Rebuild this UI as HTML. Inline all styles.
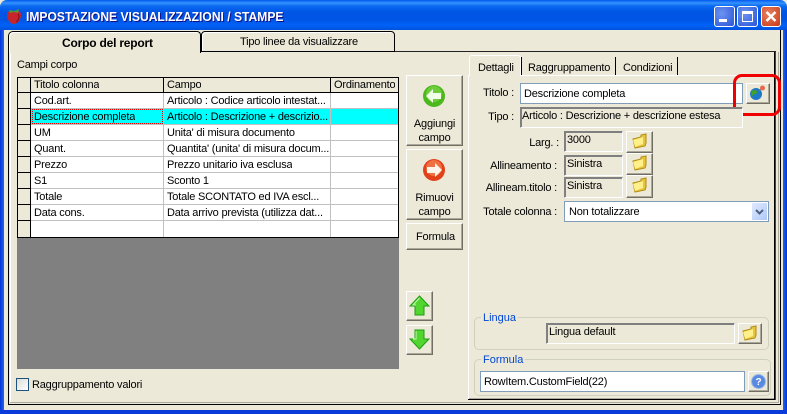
<!DOCTYPE html>
<html><head><meta charset="utf-8"><style>
html,body{margin:0;padding:0;background:#fff}
#w{position:relative;width:787px;height:414px;overflow:hidden;background:#ECE9D8;font:11px/13px "Liberation Sans",sans-serif;color:#000;letter-spacing:-.2px}
#w div,#w svg{position:absolute}
.t{white-space:nowrap}
.btn{background:#ECE9D8;border:1px solid;border-color:#fff #716F64 #716F64 #fff;box-shadow:inset -1px -1px 0 #ACA899;box-sizing:border-box;text-align:center}
.ro{background:#ECE9D8;border:1px solid;border-color:#808080 #fff #fff #808080;box-shadow:inset 1px 1px 0 #808080;box-sizing:border-box;padding:2px 0 0 2px;white-space:nowrap}
.inp{background:#fff;border:1px solid #7F9DB9;box-sizing:border-box;padding:4px 0 0 3px;white-space:nowrap}
.c{white-space:nowrap;height:15px;line-height:17px;overflow:hidden}
.lb{text-align:right;white-space:nowrap}
.grp{border:1px solid #D0D0BF;border-radius:5px;box-sizing:border-box}
.leg{background:#ECE9D8;color:#0046D5;padding:0 2px;white-space:nowrap}
.cap{border-radius:3px;border:1px solid #fff;box-sizing:border-box}
</style></head><body><div id="w">
<!-- title bar -->
<div style="left:0;top:0;width:787px;height:30px;border-radius:7px 7px 0 0;background:linear-gradient(#0058EE 0,#3593FF 3px,#0A6AF0 6px,#0055E5 12px,#0055E5 20px,#0062F8 25px,#0052DD 30px)"></div>
<div style="left:0;top:30px;width:4px;height:384px;background:linear-gradient(90deg,#0831D9,#166AEE)"></div>
<div style="left:783px;top:30px;width:4px;height:384px;background:linear-gradient(270deg,#0831D9,#166AEE)"></div>
<div style="left:0;top:410px;width:787px;height:4px;background:#0B3ADB"></div>
<svg style="left:7px;top:8px" width="14" height="16" viewBox="0 0 14 16"><path d="M7 3C2 2 0 4 0 7c0 4 3 9 7 9s7-5 7-9c0-3-2-5-7-4z" fill="#C8242C"/><path d="M2 2l5 1 5-2-1 4-4-1-4 1z" fill="#4E9A36"/><path d="M11 6c2 2 1 6-2 8" stroke="#7A1018" fill="none"/></svg>
<div class="t" style="left:26px;top:9px;color:#fff;letter-spacing:0;font:bold 13px/16px 'Liberation Sans',sans-serif;text-shadow:1px 1px 0 #0F1089;transform-origin:0 0;transform:scaleX(.93)">IMPOSTAZIONE VISUALIZZAZIONI / STAMPE</div>
<!-- caption buttons -->
<div class="cap" style="left:714px;top:6px;width:21px;height:21px;background:radial-gradient(circle at 35% 35%,#6C93F0,#2A55D8)"></div>
<div style="left:719px;top:19px;width:8px;height:3px;background:#fff"></div>
<div class="cap" style="left:737px;top:6px;width:21px;height:21px;background:radial-gradient(circle at 35% 35%,#6C93F0,#2A55D8)"></div>
<div style="left:742px;top:11px;width:11px;height:11px;border:1px solid #fff;border-top-width:3px;box-sizing:border-box"></div>
<div class="cap" style="left:761px;top:6px;width:20px;height:21px;background:radial-gradient(circle at 35% 35%,#E8805F,#C83A18)"></div>
<svg style="left:761px;top:6px" width="20" height="21"><path d="M5.500 6l9 9M14.500 6l-9 9" stroke="#fff" stroke-width="2.4"/></svg>
<!-- outer frame -->
<div style="left:8px;top:36px;width:1px;height:369px;background:#000"></div>
<div style="left:780px;top:30px;width:1px;height:375px;background:#000"></div>
<div style="left:8px;top:404px;width:773px;height:1px;background:#000"></div>
<div style="left:10px;top:402px;width:769px;height:1px;background:#ACA899"></div>
<div style="left:778px;top:52px;width:1px;height:351px;background:#ACA899"></div>
<div style="left:10px;top:52px;width:1px;height:350px;background:#fff"></div>
<!-- second tab -->
<div style="left:201px;top:31px;width:194px;height:21px;border:1px solid #000;border-radius:4px 4px 0 0;box-sizing:border-box;background:#ECE9D8;box-shadow:inset 1px 1px 0 #fff"></div>
<div class="t" style="left:240px;top:36px">Tipo linee da visualizzare</div>
<div style="left:395px;top:51px;width:381px;height:1px;background:#222"></div>
<!-- selected tab -->
<div style="left:8px;top:31px;width:193px;height:22px;border:1px solid #000;border-bottom:0;border-radius:5px 4px 0 0;box-sizing:border-box;background:#ECE9D8;box-shadow:inset 1px 1px 0 #fff"></div>
<div class="t" style="left:62px;top:37px;font-weight:bold;font-size:12px;line-height:13px">Corpo del report</div>
<div class="t" style="left:17px;top:59px">Campi corpo</div>
<!-- grid -->
<div style="left:17px;top:77px;width:382px;height:292px;background:#808080"></div>
<div style="left:17px;top:77px;width:382px;height:161px;background:#fff;border-top:1px solid #000;border-left:1px solid #000;box-sizing:border-box"></div>
<div style="left:18px;top:78px;width:380px;height:14px;background:#ECE9D8"></div>
<div style="left:18px;top:92px;width:12px;height:145px;background:#ECE9D8"></div>
<div style="left:31px;top:109px;width:367px;height:15px;background:#0FF"></div>
<div style="left:31px;top:108px;width:367px;height:1px;background:#C0C0C0"></div>
<div style="left:31px;top:124px;width:367px;height:1px;background:#C0C0C0"></div>
<div style="left:31px;top:140px;width:367px;height:1px;background:#C0C0C0"></div>
<div style="left:31px;top:156px;width:367px;height:1px;background:#C0C0C0"></div>
<div style="left:31px;top:172px;width:367px;height:1px;background:#C0C0C0"></div>
<div style="left:31px;top:188px;width:367px;height:1px;background:#C0C0C0"></div>
<div style="left:31px;top:204px;width:367px;height:1px;background:#C0C0C0"></div>
<div style="left:31px;top:220px;width:367px;height:1px;background:#C0C0C0"></div>
<div style="left:18px;top:92px;width:380px;height:1px;background:#000"></div>
<div style="left:18px;top:108px;width:13px;height:1px;background:#000"></div>
<div style="left:18px;top:124px;width:13px;height:1px;background:#000"></div>
<div style="left:18px;top:140px;width:13px;height:1px;background:#000"></div>
<div style="left:18px;top:156px;width:13px;height:1px;background:#000"></div>
<div style="left:18px;top:172px;width:13px;height:1px;background:#000"></div>
<div style="left:18px;top:188px;width:13px;height:1px;background:#000"></div>
<div style="left:18px;top:204px;width:13px;height:1px;background:#000"></div>
<div style="left:18px;top:220px;width:13px;height:1px;background:#000"></div>
<div style="left:17px;top:237px;width:382px;height:1px;background:#000"></div>
<div style="left:30px;top:77px;width:1px;height:160px;background:#000"></div>
<div style="left:163px;top:77px;width:1px;height:15px;background:#000"></div>
<div style="left:330px;top:77px;width:1px;height:15px;background:#000"></div>
<div style="left:398px;top:77px;width:1px;height:160px;background:#000"></div>
<div style="left:163px;top:93px;width:1px;height:144px;background:#C0C0C0"></div>
<div style="left:330px;top:93px;width:1px;height:144px;background:#C0C0C0"></div>
<div style="left:32px;top:109px;width:131px;height:15px;outline:1px dotted #E00000;outline-offset:-1px"></div>
<div class="c" style="left:34px;top:77px">Titolo colonna</div><div class="c" style="left:167px;top:77px">Campo</div><div class="c" style="left:334px;top:77px">Ordinamento</div>
<div class="c" style="left:34px;top:93px">Cod.art.</div><div class="c" style="left:167px;top:93px">Articolo : Codice articolo intestat...</div>
<div class="c" style="left:34px;top:109px">Descrizione completa</div><div class="c" style="left:167px;top:109px">Articolo : Descrizione + descrizio...</div>
<div class="c" style="left:34px;top:125px">UM</div><div class="c" style="left:167px;top:125px">Unita' di misura documento</div>
<div class="c" style="left:34px;top:141px">Quant.</div><div class="c" style="left:167px;top:141px">Quantita' (unita' di misura docum...</div>
<div class="c" style="left:34px;top:157px">Prezzo</div><div class="c" style="left:167px;top:157px">Prezzo unitario iva esclusa</div>
<div class="c" style="left:34px;top:173px">S1</div><div class="c" style="left:167px;top:173px">Sconto 1</div>
<div class="c" style="left:34px;top:189px">Totale</div><div class="c" style="left:167px;top:189px">Totale SCONTATO ed IVA escl...</div>
<div class="c" style="left:34px;top:205px">Data cons.</div><div class="c" style="left:167px;top:205px">Data arrivo prevista (utilizza dat...</div>
<!-- checkbox -->
<div style="left:16px;top:378px;width:13px;height:13px;border:1px solid #1C5180;box-sizing:border-box;background:linear-gradient(135deg,#DCDCD7,#fff)"></div>
<div class="t" style="left:32px;top:379px">Raggruppamento valori</div>
<!-- middle buttons -->
<div class="btn" style="left:406px;top:75px;width:57px;height:71px"></div>
<svg style="left:423px;top:85px" width="22" height="22" viewBox="0 0 22 22"><circle cx="11" cy="11" r="11" fill="#4CB81E"/><circle cx="11" cy="9" r="8" fill="#7BD644" opacity=".7"/><path d="M3 11l7-7v4h8v6h-8v4z" fill="#F2FFE8"/></svg>
<div class="t" style="left:406px;top:117px;width:57px;text-align:center;line-height:14px;white-space:normal">Aggiungi<br>campo</div>
<div class="btn" style="left:406px;top:149px;width:57px;height:71px"></div>
<svg style="left:423px;top:159px" width="22" height="22" viewBox="0 0 22 22"><circle cx="11" cy="11" r="11" fill="#E2401A"/><circle cx="11" cy="9" r="8" fill="#F58454" opacity=".7"/><path d="M19 11l-7-7v4H4v6h8v4z" fill="#FFF4EA"/></svg>
<div class="t" style="left:406px;top:191px;width:57px;text-align:center;line-height:14px;white-space:normal">Rimuovi<br>campo</div>
<div class="btn" style="left:406px;top:223px;width:57px;height:27px;line-height:27px;padding-left:2px">Formula</div>
<div class="btn" style="left:406px;top:291px;width:27px;height:30px"></div>
<svg style="left:409px;top:295px" width="21" height="21" viewBox="0 0 21 21"><path d="M10.500 1L20 11h-5v9H6v-9H1z" fill="#50D62E" stroke="#1E9A14"/><path d="M10.500 3L4 10h3" stroke="#C6FFB0" fill="none"/></svg>
<div class="btn" style="left:406px;top:325px;width:27px;height:30px"></div>
<svg style="left:409px;top:329px" width="21" height="21" viewBox="0 0 21 21"><path d="M10.500 20L20 10h-5V1H6v9H1z" fill="#50D62E" stroke="#1E9A14"/><path d="M7 2v8H4" stroke="#C6FFB0" fill="none"/></svg>
<!-- right panel -->
<div style="left:468px;top:75px;width:1px;height:324px;background:#fff"></div>
<div style="left:468px;top:399px;width:307px;height:1px;background:#000"></div>
<div style="left:469px;top:398px;width:305px;height:1px;background:#ACA899"></div>
<div style="left:469px;top:75px;width:305px;height:1px;background:#fff"></div>
<div style="left:469px;top:55px;width:52px;height:21px;background:#ECE9D8;border:1px solid #fff;border-bottom:0;border-radius:3px 3px 0 0;box-sizing:border-box"></div>
<div class="t" style="left:478px;top:62px">Dettagli</div>
<div style="left:521px;top:57px;width:1px;height:18px;background:#000"></div>
<div class="t" style="left:528px;top:62px">Raggruppamento</div>
<div style="left:615px;top:57px;width:1px;height:18px;background:#000"></div>
<div class="t" style="left:623px;top:62px">Condizioni</div>
<div style="left:677px;top:57px;width:1px;height:18px;background:#000"></div>
<div style="left:774px;top:52px;width:1px;height:348px;background:#000"></div>
<div style="left:775px;top:52px;width:1px;height:348px;background:#444"></div>
<div class="lb" style="left:460px;top:87px;width:54px">Titolo :</div>
<div class="inp" style="left:520px;top:83px;width:223px;height:21px">Descrizione completa</div>
<div class="btn" style="left:746px;top:83px;width:24px;height:21px"></div>
<svg style="left:749px;top:85px" width="17" height="16" viewBox="0 0 17 16"><circle cx="7" cy="9" r="6" fill="#1E78C8"/><path d="M3 6c2-2 4-1 5 0s0 3-2 3-2 3-3 2-1-3 0-5z" fill="#3FA02E"/><path d="M10 6l3-3" stroke="#777"/><circle cx="13.500" cy="3" r="2.500" fill="#E86A4A"/></svg>
<div style="left:733px;top:74px;width:48px;height:42px;border:3px solid #F00000;border-radius:9px;box-sizing:border-box"></div>
<div class="lb" style="left:460px;top:111px;width:54px">Tipo :</div>
<div class="ro" style="left:520px;top:107px;width:223px;height:21px;padding-left:1px">Articolo : Descrizione + descrizione estesa</div>
<div class="lb" style="left:480px;top:137px;width:79px">Larg. :</div>
<div class="ro" style="left:564px;top:131px;width:59px;height:21px">3000</div>
<div class="lb" style="left:480px;top:160px;width:77px">Allineamento :</div>
<div class="ro" style="left:564px;top:155px;width:59px;height:21px">Sinistra</div>
<div class="lb" style="left:470px;top:182px;width:87px">Allineam.titolo :</div>
<div class="ro" style="left:564px;top:177px;width:59px;height:21px">Sinistra</div>
<div class="btn" style="left:626px;top:131px;width:27px;height:22px"></div>
<svg style="left:632px;top:133px" width="15" height="16" viewBox="0 0 15 16"><path d="M1 6l8-2V2l5-1v9l-1 3-10 2z" fill="#E8C43C" stroke="#B08C10"/><path d="M1 7l10-3v7L3 14z" fill="#FFF08A"/></svg>
<div class="btn" style="left:626px;top:153px;width:27px;height:22px"></div>
<svg style="left:632px;top:155px" width="15" height="16" viewBox="0 0 15 16"><path d="M1 6l8-2V2l5-1v9l-1 3-10 2z" fill="#E8C43C" stroke="#B08C10"/><path d="M1 7l10-3v7L3 14z" fill="#FFF08A"/></svg>
<div class="btn" style="left:626px;top:175px;width:27px;height:23px"></div>
<svg style="left:632px;top:177px" width="15" height="16" viewBox="0 0 15 16"><path d="M1 6l8-2V2l5-1v9l-1 3-10 2z" fill="#E8C43C" stroke="#B08C10"/><path d="M1 7l10-3v7L3 14z" fill="#FFF08A"/></svg>
<div class="lb" style="left:470px;top:206px;width:87px">Totale colonna :</div>
<div class="inp" style="left:564px;top:201px;width:205px;height:21px;padding:4px 0 0 4px">Non totalizzare</div>
<div style="left:752px;top:203px;width:15px;height:17px;background:linear-gradient(135deg,#E1EAFE,#AEC8F7)"></div>
<svg style="left:752px;top:203px" width="15" height="17"><path d="M4 7l3.500 3.500L11 7" stroke="#4D6185" stroke-width="2" fill="none"/></svg>
<!-- groups -->
<div class="grp" style="left:474px;top:317px;width:295px;height:33px"></div>
<div class="leg t" style="left:481px;top:312px;letter-spacing:0">Lingua</div>
<div class="ro" style="left:546px;top:323px;width:189px;height:21px">Lingua default</div>
<div class="btn" style="left:738px;top:323px;width:24px;height:21px"></div>
<svg style="left:742px;top:325px" width="15" height="16" viewBox="0 0 15 16"><path d="M1 6l8-2V2l5-1v9l-1 3-10 2z" fill="#E8C43C" stroke="#B08C10"/><path d="M1 7l10-3v7L3 14z" fill="#FFF08A"/></svg>
<div class="grp" style="left:474px;top:359px;width:297px;height:37px"></div>
<div class="leg t" style="left:481px;top:354px;letter-spacing:0">Formula</div>
<div class="inp" style="left:480px;top:371px;width:265px;height:21px">RowItem.CustomField(22)</div>
<div class="btn" style="left:748px;top:371px;width:21px;height:21px"></div>
<svg style="left:751px;top:374px" width="15" height="15" viewBox="0 0 15 15"><circle cx="7.500" cy="7.500" r="7" fill="#5A8AE0" stroke="#9DB8E8"/><text x="7.500" y="11" text-anchor="middle" font-family="Liberation Sans" font-weight="bold" font-size="10" fill="#fff">?</text></svg>
</div></body></html>
